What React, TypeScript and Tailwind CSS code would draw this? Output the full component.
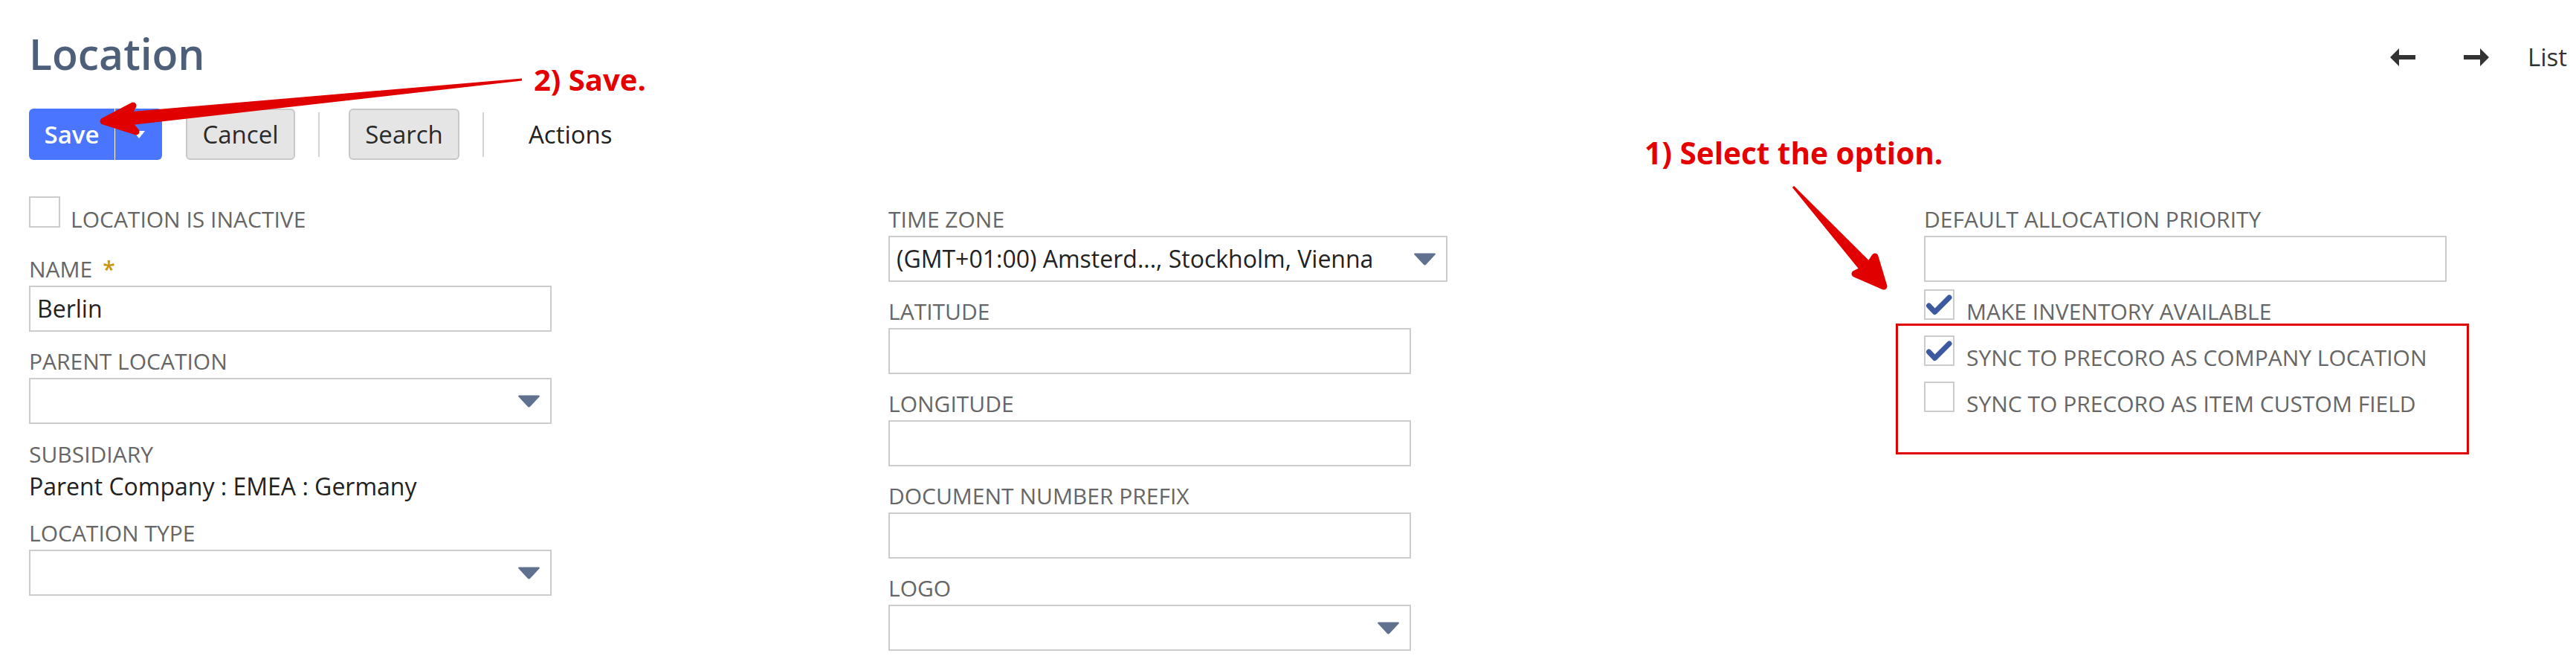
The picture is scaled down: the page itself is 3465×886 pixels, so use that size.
import React from "react";

const Label = ({ children }: { children: React.ReactNode }) => (
  <div className="h-[30px] text-[30px] leading-[30px] text-[#666] whitespace-nowrap">
    {children}
  </div>
);

const Caret = () => (
  <svg width="31" height="17" viewBox="0 0 31 17" className="block">
    <path
      d="M2.5 0.5 H28.5 Q30.8 0.5 29.4 2.6 L17.3 15.6 Q15.5 17.4 13.7 15.6 L1.6 2.6 Q0.2 0.5 2.5 0.5Z"
      fill="#60708f"
    />
  </svg>
);

const TextField = ({ label, wide }: { label: string; wide?: boolean }) => (
  <div>
    <Label>{label}</Label>
    <div
      className={`mt-[7px] h-[62px] border-2 border-[#cccccc] bg-white ${
        wide ? "w-[753px]" : "w-[703px]"
      }`}
    />
  </div>
);

const SelectField = ({ label, value, wide }: { label: string; value?: string; wide?: boolean }) => (
  <div>
    <Label>{label}</Label>
    <div
      className={`mt-[7px] h-[62px] border-2 border-[#cccccc] bg-white flex items-center justify-between pl-[9px] pr-[13px] ${
        wide ? "w-[752px]" : "w-[703px]"
      }`}
    >
      <span className="text-[32px] leading-[32px] text-[#222] whitespace-nowrap">{value}</span>
      <Caret />
    </div>
  </div>
);

const Checkbox = ({ checked, size = "w-[41px] h-[41px]" }: { checked?: boolean; size?: string }) => (
  <div className={`${size} shrink-0 border-2 border-[#cccccc] bg-white`}>
    {checked && (
      <svg width="37" height="37" viewBox="0 0 37 37" className="block">
        <path
          d="M4.5 20 L12.5 28.5 L32 9"
          fill="none"
          stroke="#3d5aa0"
          strokeWidth="7"
          strokeLinecap="round"
          strokeLinejoin="round"
        />
      </svg>
    )}
  </div>
);

const CheckRow = ({ label, checked }: { label: string; checked?: boolean }) => (
  <div className="flex items-end gap-[16px]">
    <Checkbox checked={checked} />
    <span className="text-[30px] leading-[23px] text-[#666] whitespace-nowrap">{label}</span>
  </div>
);

const NavArrow = ({ dir }: { dir: "left" | "right" }) => (
  <svg width="34" height="24" viewBox="0 0 34 24" className="block">
    <path
      d={
        dir === "left"
          ? "M0 12 L12 0 L12 9 L34 9 L34 15 L12 15 L12 24 Z"
          : "M34 12 L22 0 L22 9 L0 9 L0 15 L22 15 L22 24 Z"
      }
      fill="#333"
    />
  </svg>
);

export default function App() {
  return (
    <div className="relative w-[3465px] h-[886px] bg-white overflow-hidden font-['Open_Sans',sans-serif]">
      {/* header */}
      <div className="flex justify-between items-start pt-[38px] pl-[39px] pr-[12px]">
        <h1 className="text-[57px] leading-[68px] font-semibold text-[#4d5f79]">Location</h1>
        <div className="mt-[19px] flex items-center">
          <NavArrow dir="left" />
          <div className="ml-[65px]">
            <NavArrow dir="right" />
          </div>
          <span className="ml-[52px] text-[33px] leading-[40px] text-[#333]">List</span>
        </div>
      </div>

      {/* buttons */}
      <div className="mt-[40px] pl-[39px] flex items-center h-[69px]">
        <div className="flex h-[69px] rounded-[6px] bg-[#4a76ff] overflow-hidden">
          <div className="w-[115px] flex items-center justify-center text-[33px] leading-[33px] font-semibold text-white">
            Save
          </div>
          <div className="w-[64px] border-l border-white flex items-center justify-center">
            <svg width="16" height="10" viewBox="0 0 16 10" className="block">
              <path d="M0 0 H16 L8 10 Z" fill="#fff" />
            </svg>
          </div>
        </div>
        <div className="ml-[32px] w-[147px] h-[69px] rounded-[6px] border-2 border-[#c8c8c8] bg-[#e5e5e5] flex items-center justify-center text-[33px] leading-[33px] text-[#2a2a2a]">
          Cancel
        </div>
        <div className="ml-[31px] w-[2px] h-[60px] bg-[#d4d4d4]" />
        <div className="ml-[39px] w-[149px] h-[69px] rounded-[6px] border-2 border-[#c8c8c8] bg-[#e5e5e5] flex items-center justify-center text-[33px] leading-[33px] text-[#2a2a2a]">
          Search
        </div>
        <div className="ml-[31px] w-[2px] h-[60px] bg-[#d4d4d4]" />
        <div className="ml-[60px] text-[33px] leading-[33px] text-[#222]">Actions</div>
      </div>

      {/* form */}
      <div className="grid grid-cols-[1156px_1393px_1fr] pl-[39px] pt-[49px]">
        <div className="flex flex-col">
          <div className="flex items-end gap-[14px]">
            <Checkbox size="w-[42px] h-[42px]" />
            <span className="text-[30px] leading-[23px] text-[#666] whitespace-nowrap">
              LOCATION IS INACTIVE
            </span>
          </div>
          <div className="mt-[41px]">
            <Label>
              NAME<span className="ml-[14px] font-semibold text-[#c8960c]">*</span>
            </Label>
            <div className="mt-[7px] h-[62px] w-[703px] border-2 border-[#cccccc] flex items-center pl-[9px]">
              <span className="text-[32px] leading-[32px] text-[#222]">Berlin</span>
            </div>
          </div>
          <div className="mt-[25px]">
            <SelectField label="PARENT LOCATION" />
          </div>
          <div className="mt-[26px]">
            <Label>SUBSIDIARY</Label>
            <div className="mt-[8px] text-[32px] leading-[40px] text-[#222] whitespace-nowrap">
              Parent Company : EMEA : Germany
            </div>
          </div>
          <div className="mt-[28px]">
            <SelectField label="LOCATION TYPE" />
          </div>
        </div>

        <div className="pt-[16px] flex flex-col gap-[25px]">
          <SelectField label="TIME ZONE" value="(GMT+01:00) Amsterd..., Stockholm, Vienna" wide />
          <TextField label="LATITUDE" />
          <TextField label="LONGITUDE" />
          <TextField label="DOCUMENT NUMBER PREFIX" />
          <SelectField label="LOGO" />
        </div>

        <div className="pt-[16px] flex flex-col">
          <TextField label="DEFAULT ALLOCATION PRIORITY" />
          <div className="mt-[10px] flex flex-col gap-[21px]">
            <CheckRow label="MAKE INVENTORY AVAILABLE" checked />
            <CheckRow label="SYNC TO PRECORO AS COMPANY LOCATION" checked />
            <CheckRow label="SYNC TO PRECORO AS ITEM CUSTOM FIELD" />
          </div>
        </div>
      </div>

      {/* annotations */}
      <div className="absolute left-[718px] top-[87px] text-[40px] leading-[40px] font-bold text-[#e50000] whitespace-nowrap">
        2) Save.
      </div>
      <div className="absolute left-[2212px] top-[185px] text-[40.5px] leading-[41px] font-bold text-[#e50000] whitespace-nowrap">
        1) Select the option.
      </div>
      <div className="absolute left-[2550px] top-[435px] w-[771px] h-[176px] border-[3px] border-[#e00000]" />
      <svg
        className="absolute inset-0 pointer-events-none"
        width="3465"
        height="886"
        viewBox="0 0 3465 886"
      >
        <polygon points="702,105.5 702,108.5 168,169 140,163 166,151" fill="#e00000" />
        <polygon
          points="139,163 179,142 169,160 183,177"
          fill="#e00000"
          stroke="#e00000"
          strokeWidth="9"
          strokeLinejoin="round"
        />
        <polygon points="2410.9,252 2413.1,250 2514.7,351 2533,384 2501.3,363" fill="#e00000" />
        <polygon
          points="2534,385 2522,345 2512,360 2495,368"
          fill="#e00000"
          stroke="#e00000"
          strokeWidth="9"
          strokeLinejoin="round"
        />
      </svg>
    </div>
  );
}
